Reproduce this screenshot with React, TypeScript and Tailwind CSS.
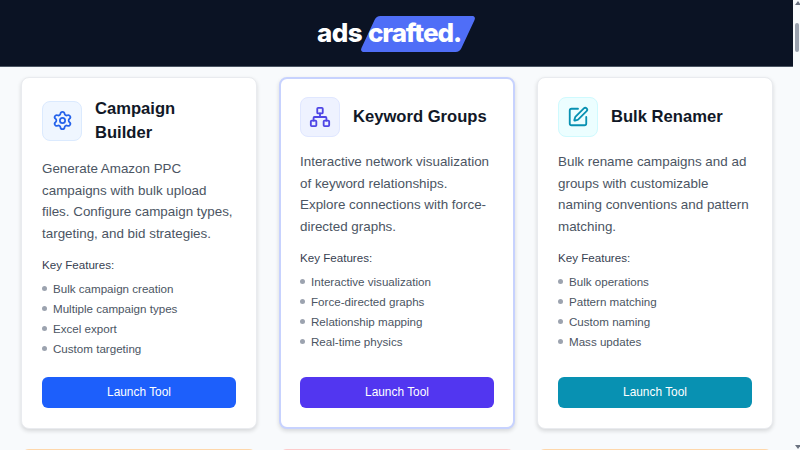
import React from "react";
import { Settings, Network, SquarePen } from "lucide-react";

const tools = [
  {
    title: "Campaign Builder",
    desc: "Generate Amazon PPC campaigns with bulk upload files. Configure campaign types, targeting, and bid strategies.",
    features: ["Bulk campaign creation", "Multiple campaign types", "Excel export", "Custom targeting"],
    Icon: Settings,
    iconSize: 21,
    iconBox: "bg-[#eff6ff] border-[#dbeafe] text-[#2563eb]",
    button: "bg-[#1d5ffb]",
    card: "border border-[#e9ebef]",
    pad: "px-[20px] pt-[19px] pb-[20px]",
  },
  {
    title: "Keyword Groups",
    desc: "Interactive network visualization of keyword relationships. Explore connections with force-directed graphs.",
    features: ["Interactive visualization", "Force-directed graphs", "Relationship mapping", "Real-time physics"],
    Icon: Network,
    iconSize: 22,
    iconBox: "bg-[#eef2ff] border-[#e0e7ff] text-[#4f46e5]",
    button: "bg-[#5236f0]",
    card: "border-2 border-[#c7d2fe]",
    pad: "px-[19px] pt-[18px] pb-[19px]",
  },
  {
    title: "Bulk Renamer",
    desc: "Bulk rename campaigns and ad groups with customizable naming conventions and pattern matching.",
    features: ["Bulk operations", "Pattern matching", "Custom naming", "Mass updates"],
    Icon: SquarePen,
    iconSize: 22,
    iconBox: "bg-[#ecfeff] border-[#cffafe] text-[#0891b2]",
    button: "bg-[#0891b2]",
    card: "border border-[#e9ebef]",
    pad: "px-[20px] pt-[19px] pb-[20px]",
  },
];

function ToolCard({ tool }: { tool: (typeof tools)[number] }) {
  const { Icon } = tool;
  return (
    <div className={`flex flex-col bg-white rounded-lg h-[352px] shadow-[0_2px_4px_rgba(0,0,0,0.14)] ${tool.card} ${tool.pad}`}>
      <div className="flex items-center gap-[13px] mb-[14px]">
        <div className={`w-10 h-10 shrink-0 rounded-lg border flex items-center justify-center ${tool.iconBox}`}>
          <Icon size={tool.iconSize} strokeWidth={2} />
        </div>
        <h3 className="text-[16.6px] leading-[23.5px] font-bold text-[#111827]">{tool.title}</h3>
      </div>
      <p className="text-[13.4px] leading-[21.7px] text-[#4b5563]">{tool.desc}</p>
      <div className="mt-[10px] mb-[5px] text-[11.6px] leading-[19px] text-[#374151]">Key Features:</div>
      <ul className="flex flex-col">
        {tool.features.map((f) => (
          <li key={f} className="flex items-center gap-[6px] h-[20px] text-[11.6px] text-[#4b5563]">
            <span className="w-[5px] h-[5px] rounded-full bg-[#9ca3af]" />
            {f}
          </li>
        ))}
      </ul>
      <button className={`mt-auto h-[31px] rounded-md text-white text-[11.9px] ${tool.button}`}>Launch Tool</button>
    </div>
  );
}

export default function App() {
  return (
    <div className="relative h-[450px] overflow-hidden bg-[#f8fafc] font-['Liberation_Sans',Arial,sans-serif]">
      <header className="h-[67px] bg-[#0b1324] border-b border-[#4b5563] flex items-center justify-center pr-[7px]">
        <div className="flex items-center text-white font-['Inter',sans-serif] font-extrabold text-[26px] leading-none tracking-[-0.6px] mr-[8px]">
          <span>ads</span>
          <span className="relative ml-[6px] pr-[7px] py-[3px] tracking-[-1.1px]">
            <span className="absolute inset-x-0 -top-[1px] -bottom-[3px] bg-[#4f6ef7] rounded-[4px] -skew-x-[25deg]" />
            <span className="relative">crafted.</span>
          </span>
        </div>
      </header>
      <main className="grid grid-cols-3 gap-x-[22px] gap-y-[20px] pl-[21px] pr-[27px] pt-[10px]">
        {tools.map((t) => (
          <ToolCard key={t.title} tool={t} />
        ))}
        <div className="h-8 bg-white rounded-lg border-2 border-[#fed7aa]" />
        <div className="h-8 bg-white rounded-lg border-2 border-[#fecaca]" />
        <div className="h-8 bg-white rounded-lg border-2 border-[#fed7aa]" />
      </main>
      <div className="absolute top-0 right-0 bottom-0 w-[7px] bg-[#f8fafc]">
        <div className="absolute top-[1px] left-[2px] w-0 h-0 border-x-[3px] border-x-transparent border-b-[4px] border-b-[#6b7280]" />
        <div className="absolute top-[23px] left-[2px] w-[4px] h-[29px] rounded-sm bg-[#9ca3af]" />
        <div className="absolute bottom-[1px] left-[2px] w-0 h-0 border-x-[3px] border-x-transparent border-t-[4px] border-t-[#6b7280]" />
      </div>
    </div>
  );
}
